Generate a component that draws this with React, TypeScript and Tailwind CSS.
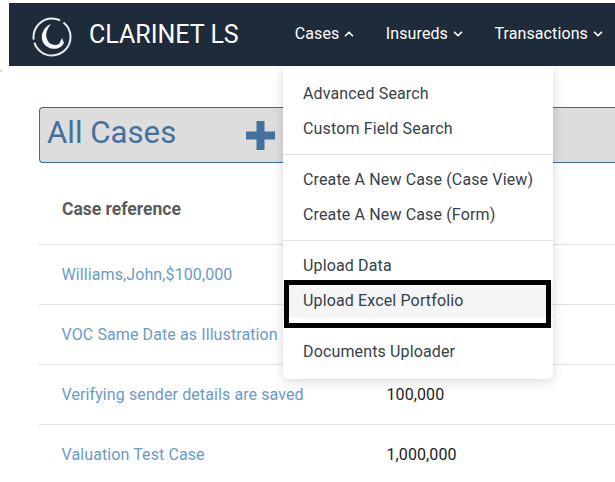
import React from 'react';
import { ChevronDown, ChevronUp } from 'lucide-react';

const font = { fontFamily: 'Roboto, "Liberation Sans", sans-serif' };

const rows = [
  { name: 'Williams,John,$100,000', amount: '' },
  { name: 'VOC Same Date as Illustration', amount: '' },
  { name: 'Verifying sender details are saved', amount: '100,000' },
  { name: 'Valuation Test Case', amount: '1,000,000' },
];

const Logo = () => (
  <svg className="mt-[4px]" width="42" height="44" viewBox="0 0 42 44" fill="none">
    <circle cx="21" cy="22" r="18.500" stroke="#e8ecef" strokeWidth="2" strokeDasharray="52 3 40 4" />
    <path d="M20 9 C 10 13 8 25 15 31 C 22 36 30 34 33 28 L 31 23 L 28 29 C 24 31 18 30 16 24 C 14 19 16 14 20 9 Z" fill="#f4f6f7" />
  </svg>
);

const NavItem = ({ label, open }: { label: string; open?: boolean }) => (
  <div className="flex items-center gap-[3px] text-[16px] tracking-[0.1px] text-white">
    <span>{label}</span>
    {open ? <ChevronUp size={14} strokeWidth={3} /> : <ChevronDown size={14} strokeWidth={3} />}
  </div>
);

const MenuItem = ({ label, active }: { label: string; active?: boolean }) => (
  <div className={`pl-5 text-[16px] leading-[33px] tracking-[0.14px] text-[#363f4a] ${active ? 'h-[34px] bg-[#f5f5f5]' : 'h-[35px]'}`}>{label}</div>
);

const App: React.FC = () => {
  return (
    <div className="relative h-[482px] w-[615px] overflow-hidden bg-white" style={font}>
      {/* Corner speck */}
      <svg className="absolute left-0 top-[69px]" width="4" height="4" viewBox="0 0 4 4">
        <path d="M0 0L3 3H0z" fill="#d5d5cf" />
      </svg>

      {/* Header */}
      <nav className="ml-[9px] mt-[3px] flex h-[63px] items-center bg-[#1e2b3a] pl-[22px]">
        <Logo />
        <span className="ml-[16px] text-[25px] text-white">CLARINET LS</span>
        <div className="mb-[2px] ml-[56px] flex gap-[29.500px] whitespace-nowrap">
          <NavItem label="Cases" open />
          <NavItem label="Insureds" />
          <NavItem label="Transactions" />
        </div>
      </nav>

      {/* Main */}
      <main className="ml-[39px] mt-[41px]">
        <div className="flex h-[56px] items-center rounded-l-[4px] border border-r-0 border-[#3f6d99] bg-[#dddddd] pb-[3px] pl-[7px]">
          <span className="text-[31.200px] text-[#44719b]">All Cases</span>
          <svg className="ml-[70px] mt-[3px]" width="29" height="29" viewBox="0 0 29 29">
            <path d="M10.500 0h8v10.500h10.500v8h-10.500v10.500h-8v-10.500h-10.500v-8h10.500z" fill="#44719b" />
          </svg>
        </div>
        <div className="flex h-[82px] items-center border-b border-[#e0e0e0] pl-[23px] pt-[11px] text-[17.500px] font-bold text-[#5c5c5c]">
          Case reference
        </div>
        {rows.map((row) => (
          <div key={row.name} className="flex h-[60px] items-center border-b border-[#e0e0e0] pl-[22.500px] text-[16px] tracking-[0.1px] last:border-b-0">
            <span className="w-[325px] text-[#6b9ac9]">{row.name}</span>
            <span className="text-[#222222]">{row.amount}</span>
          </div>
        ))}
      </main>

      {/* Cases dropdown */}
      <div className="absolute left-[283px] top-[66px] h-[313px] w-[270px] rounded-b-[6px] bg-white pt-[11px] shadow-[0_2px_12px_rgba(0,0,0,0.16)]">
        <MenuItem label="Advanced Search" />
        <MenuItem label="Custom Field Search" />
        <div className="mb-[8px] mt-[7px] border-t border-[#e2e2e2]" />
        <MenuItem label="Create A New Case (Case View)" />
        <MenuItem label="Create A New Case (Form)" />
        <div className="mb-[8px] mt-[7px] border-t border-[#e2e2e2]" />
        <MenuItem label="Upload Data" />
        <MenuItem label="Upload Excel Portfolio" active />
        <div className="mb-[8px] mt-[8px] border-t border-[#e2e2e2]" />
        <MenuItem label="Documents Uploader" />
      </div>

      {/* Annotation box */}
      <div className="absolute left-[284px] top-[280px] h-[48px] w-[267px] border-[5px] border-black" />
    </div>
  );
};

export default App;
